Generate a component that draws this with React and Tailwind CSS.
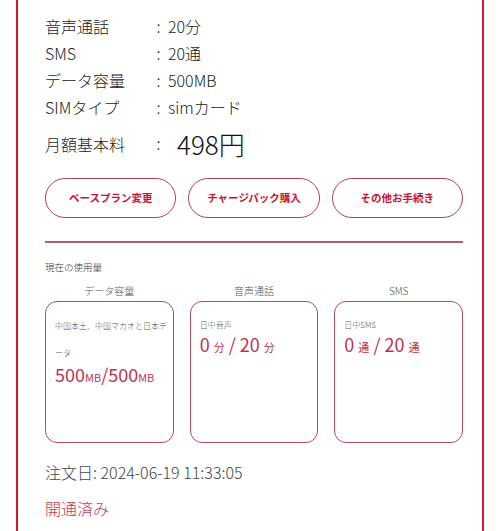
const PLAN_ROWS = [
  { label: "音声通話", value: "20分" },
  { label: "SMS", value: "20通" },
  { label: "データ容量", value: "500MB" },
  { label: "SIMタイプ", value: "simカード" },
];

const ACTIONS = ["ベースプラン変更", "チャージパック購入", "その他お手続き"];

const FONT = {
  fontFamily: '"Noto Sans CJK JP", "Noto Sans", sans-serif',
};

function UsageCard({ title, children }) {
  return (
    <div className="flex flex-col items-center">
      <div className="h-[14px] text-[10px] leading-[14px] text-[#555]">{title}</div>
      <div className="mt-[3px] h-[142px] w-full rounded-[12px] border-[1.5px] border-[#b8485f] px-[9px]">
        {children}
      </div>
    </div>
  );
}

export default function App() {
  return (
    <div className="min-h-[531px] bg-white px-[16px] font-light" style={FONT}>
      <div className="border-x-2 border-[#d6172f] pb-[30px] pl-[27px] pr-[19px] pt-[13px]">
        <div className="text-[16px] text-[#222]">
          {PLAN_ROWS.map((row) => (
            <div key={row.label} className="flex h-[27px] items-center leading-[27px]">
              <span className="w-[104px]">{row.label}</span>
              <span className="w-[19px] text-center">:</span>
              <span>{row.value}</span>
            </div>
          ))}
          <div className="mt-[5px] flex h-[36px] items-center">
            <span className="w-[104px]">月額基本料</span>
            <span className="-mt-[3px] w-[19px] text-center">:</span>
            <span className="ml-[9px] text-[26px] leading-[36px] text-[#111]">498円</span>
          </div>
        </div>

        <div className="mt-[16px] grid grid-cols-3 gap-[12px]">
          {ACTIONS.map((label) => (
            <button
              key={label}
              className="h-[40px] rounded-full border-[1.5px] border-[#b04058] bg-white text-[10.5px] font-bold text-[#c8142f]"
            >
              {label}
            </button>
          ))}
        </div>

        <div className="mt-[23px] h-[2px] bg-[#b65a70]" />

        <div className="mt-[17px] text-[9.5px] leading-[14px] text-[#333]">現在の使用量</div>

        <div className="mt-[10px] grid grid-cols-3 gap-[16px]">
          <UsageCard title="データ容量">
            <p className="mt-[10px] whitespace-nowrap text-[8px] leading-[27px] text-[#555]">
              中国本土、中国マカオと日本デ
              <br />
              ータ
            </p>
            <div className="-mt-[4px] text-[18px] font-normal leading-[24px] text-[#bd3450]">
              500<span className="text-[11px]">MB</span>/500<span className="text-[11px]">MB</span>
            </div>
          </UsageCard>
          <UsageCard title="音声通話">
            <p className="mt-[16px] text-[8px] leading-[14px] text-[#555]">日中音声</p>
            <div className="text-[18px] font-normal leading-[24px] text-[#bd3450]">
              0 <span className="text-[11px]">分</span> / 20 <span className="text-[11px]">分</span>
            </div>
          </UsageCard>
          <UsageCard title="SMS">
            <p className="mt-[16px] text-[8px] leading-[14px] text-[#555]">日中SMS</p>
            <div className="text-[18px] font-normal leading-[24px] text-[#bd3450]">
              0 <span className="text-[11px]">通</span> / 20 <span className="text-[11px]">通</span>
            </div>
          </UsageCard>
        </div>

        <div className="mt-[17px] text-[16px] leading-[24px] text-[#444]">
          注文日: 2024-06-19 11:33:05
        </div>
        <div className="mt-[12px] text-[16px] leading-[24px] text-[#c43a55]">開通済み</div>
      </div>
    </div>
  );
}
